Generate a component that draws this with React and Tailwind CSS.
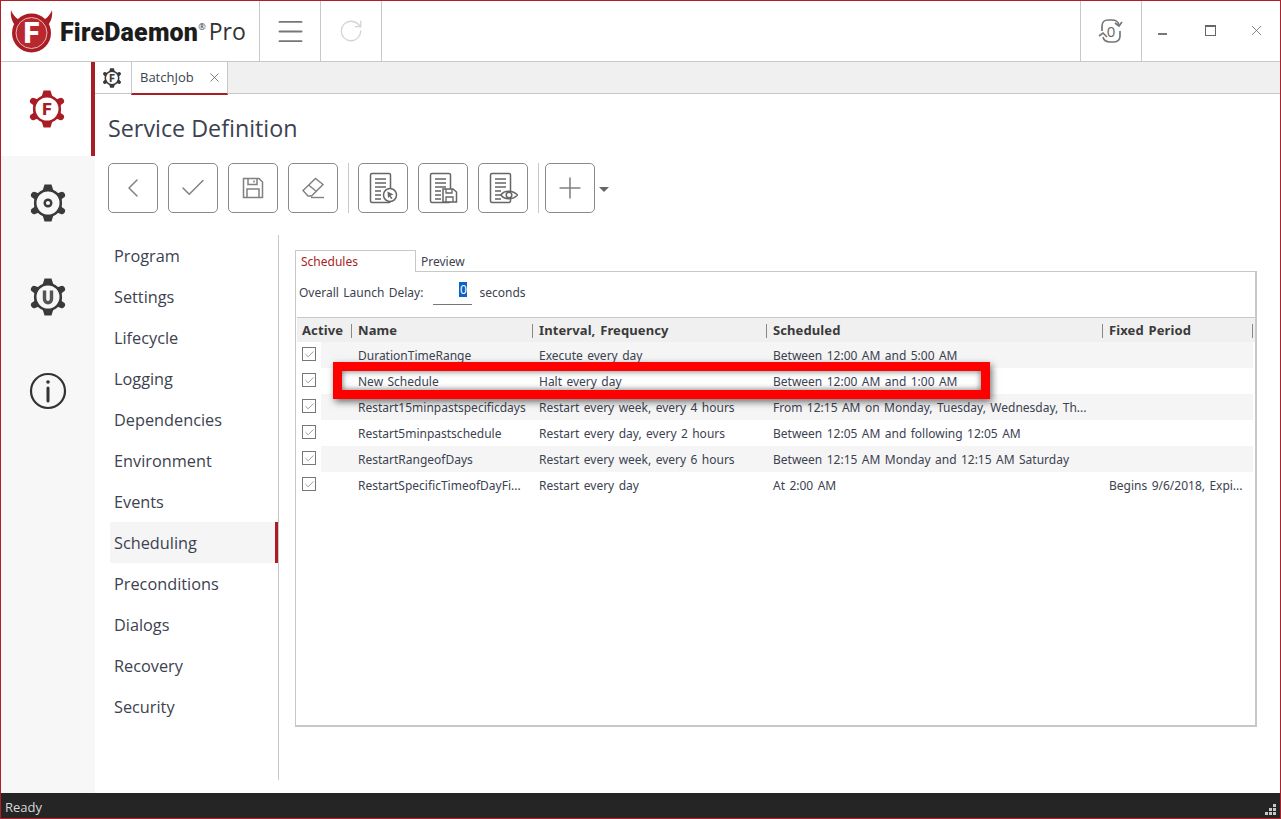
import { Menu, RotateCw, ChevronLeft, Check, Plus, X } from 'lucide-react';

const NAV = ['Program', 'Settings', 'Lifecycle', 'Logging', 'Dependencies', 'Environment', 'Events', 'Scheduling', 'Preconditions', 'Dialogs', 'Recovery', 'Security'];

const ROWS = [
    ['DurationTimeRange', 'Execute every day', 'Between 12:00 AM and 5:00 AM', ''],
    ['New Schedule', 'Halt every day', 'Between 12:00 AM and 1:00 AM', ''],
    ['Restart15minpastspecificdays', 'Restart every week, every 4 hours', 'From 12:15 AM on Monday, Tuesday, Wednesday, Th...', ''],
    ['Restart5minpastschedule', 'Restart every day, every 2 hours', 'Between 12:05 AM and following 12:05 AM', ''],
    ['RestartRangeofDays', 'Restart every week, every 6 hours', 'Between 12:15 AM Monday and 12:15 AM Saturday', ''],
    ['RestartSpecificTimeofDayFi...', 'Restart every day', 'At 2:00 AM', 'Begins 9/6/2018, Expi...'],
];

const COLS = 'grid grid-cols-[55px_181px_234px_336px_150px]';

export default function App() {
    return (
        <div className="h-[819px] w-[1281px] flex flex-col bg-white border border-[#b0202a] overflow-hidden font-['Open_Sans',sans-serif] text-[#333]">
            <TitleBar />
            <div className="flex flex-1 min-h-0">
                <SideRail />
                <div className="flex-1 flex flex-col min-w-0">
                    <TabStrip />
                    <h1 className="ml-[13px] mt-[16px] h-[36px] text-[23.3px] leading-[36px] text-[#3c4250]">Service Definition</h1>
                    <Toolbar />
                    <div className="flex flex-1 min-h-0 mt-[22px] mb-[13px]">
                        <SectionNav />
                        <SchedulePanel />
                    </div>
                </div>
            </div>
            <div className="h-[25px] shrink-0 bg-[#252525] text-[#d8d8d8] text-[13px] leading-[28px] pl-1 flex justify-between">
                <span>Ready</span>
                <Grip />
            </div>
        </div>
    );
}

function TitleBar() {
    return (
        <div className="h-[61px] shrink-0 flex border-b border-[#c8c8c8]">
            <div className="w-[258px] shrink-0 flex items-center pl-[9px]">
                <Logo />
                <span className="ml-[7px] mt-[3px] font-['Roboto',sans-serif] font-black text-[25px] tracking-[0.2px] text-[#1c1c1c]">FireDaemon</span>
                <span className="text-[9px] self-start mt-[19px] text-[#333]">®</span>
                <span className="ml-[3px] text-[23px] text-[#333]">Pro</span>
            </div>
            <div className="w-[61px] border-l border-[#c8c8c8] flex items-center justify-center">
                <Menu size={33} strokeWidth={1.4} className="text-[#777]" />
            </div>
            <div className="w-[62px] border-l border-r border-[#c8c8c8] flex items-center justify-center">
                <RotateCw size={26} strokeWidth={1.2} className="text-[#d4d4d4]" />
            </div>
            <div className="flex-1" />
            <div className="w-[62px] border-l border-r border-[#c8c8c8] flex items-center justify-center">
                <ResetIcon />
            </div>
            <div className="w-[138px] flex items-center text-[#666]">
                <div className="ml-[16px] mt-[5px] w-[9px] h-[2px] bg-[#777]" />
                <div className="ml-[38px] mt-[-1px] w-[11px] h-[11px] border border-t-2 border-[#666]" />
                <X size={17} strokeWidth={1.1} className="ml-[32px] mt-[-1px]" />
            </div>
        </div>
    );
}

function Logo() {
    return (
        <svg width="43" height="44" viewBox="0 0 43 44">
            <path d="M1 1 C0 9 3 15 8 19 L13 12 C8 11 3 7 1 1Z M42 1 C43 9 40 15 35 19 L30 12 C35 11 40 7 42 1Z" fill="#a81e24" />
            <circle cx="21.5" cy="24" r="19.5" fill="#a81e24" />
            <circle cx="21.5" cy="24" r="15.5" fill="#b8282e" stroke="#e8b8b8" strokeWidth="1" />
            <text x="21.5" y="34" textAnchor="middle" fontFamily="Roboto" fontWeight="900" fontSize="29" fill="#fff">F</text>
        </svg>
    );
}

function ResetIcon() {
    return (
        <svg width="28" height="28" viewBox="0 0 28 28" fill="none" stroke="#777" strokeWidth="1.7">
            <path d="M22 8 C21 4 18 3 15 3 H11 C7 3 5 6 5 9 V14" />
            <path d="M6 20 C7 24 10 25 13 25 H17 C21 25 23 22 23 19 V14" />
            <path d="M25 5 L22 9 L18 6" />
            <path d="M2 19 L6 16 L10 20" />
            <text x="14" y="20" textAnchor="middle" fontFamily="Open Sans" fontSize="15" fill="#666" stroke="none">0</text>
        </svg>
    );
}

function Gear({ size = 38, color = '#3a3a3a', stroke = 2.6, children }) {
    return (
        <svg width={size} height={size} viewBox="0 0 38 38" fill="none">
            {[0, 180].map((a) => (
                <path key={a} d="M13.5 7 L15.5 0.5 H22.5 L24.5 7 Z" fill={color} transform={`rotate(${a} 19 19)`} />
            ))}
            {[60, 120, 240, 300].map((a) => (
                <g key={a} transform={`rotate(${a} 19 19)`}>
                    <path d="M15 7 L16 3 H22 L23 7 Z" fill={color} />
                    <circle cx="19" cy="3" r="3.2" fill={color} />
                </g>
            ))}
            <circle cx="19" cy="19" r="12.8" stroke={color} strokeWidth={stroke} />
            {children}
        </svg>
    );
}

function SideRail() {
    return (
        <div className="w-[94px] shrink-0 bg-[#f7f7f7] flex flex-col items-stretch">
            <div className="h-[94px] bg-white border-r-[4px] border-[#a81e24] flex items-center justify-center pl-[1px]">
                <Gear color="#a81e24">
                    <text x="19" y="25" textAnchor="middle" fontFamily="Roboto" fontWeight="900" fontSize="17" fill="#a81e24">F</text>
                </Gear>
            </div>
            <div className="h-[94px] flex items-center justify-center">
                <Gear>
                    <circle cx="19" cy="19" r="3.3" stroke="#3a3a3a" strokeWidth="2.4" />
                </Gear>
            </div>
            <div className="h-[94px] flex items-center justify-center">
                <Gear>
                    <path d="M15.5 12.5 V21 C15.5 26 22.5 26 22.5 21 V12.5" stroke="#555" strokeWidth="3.4" />
                </Gear>
            </div>
            <div className="h-[94px] flex items-center justify-center">
                <svg width="38" height="38" viewBox="0 0 38 38" fill="none" stroke="#333" strokeWidth="2.2">
                    <circle cx="19" cy="19" r="17" />
                    <path d="M19 16 V29" strokeWidth="3" strokeLinecap="round" />
                    <circle cx="19" cy="10" r="1.8" fill="#333" stroke="none" />
                </svg>
            </div>
        </div>
    );
}

function TabStrip() {
    return (
        <div className="h-[32px] shrink-0 flex bg-[#f0f0f0] border-b border-[#c8c8c8]">
            <div className="w-[36px] bg-white flex items-center justify-center pr-[3px]">
                <Gear size={20} stroke={3}>
                    <text x="19" y="26" textAnchor="middle" fontFamily="Roboto" fontWeight="900" fontSize="19" fill="#3a3a3a">F</text>
                </Gear>
            </div>
            <div className="w-[97px] h-[33px] bg-white border-l border-r border-[#c8c8c8] border-b-2 border-b-[#a81e24] flex items-center pl-[8px] text-[13px] text-[#3c4250]">
                BatchJob
                <X size={15} strokeWidth={1.2} className="ml-[13px] text-[#555]" />
            </div>
        </div>
    );
}

function ToolButton({ children }) {
    return (
        <div className="w-[50px] h-[50px] border border-[#8a8a8a] rounded-[5px] flex items-center justify-center text-[#808080]">
            {children}
        </div>
    );
}

function DocIcon({ children }) {
    return (
        <svg width="30" height="32" viewBox="0 0 30 32" fill="none" stroke="#666" strokeWidth="1.5">
            <path d="M4 1.5 H21 C21.7 1.5 22.5 2 22.5 3 V28.5 C22.5 29.5 21.7 30.5 21 30.5 H4 C3 30.5 2.5 29.5 2.5 28.5 V3 C2.5 2 3 1.5 4 1.5Z" />
            <path d="M7 7 H18 M7 11 H18 M7 15 H18 M7 19 H13 M7 23 H13 M7 27 H13" strokeWidth="1.3" />
            {children}
        </svg>
    );
}

function Toolbar() {
    return (
        <div className="ml-[13px] mt-[17px] h-[50px] flex items-center shrink-0">
            <div className="flex gap-[10px]">
                <ToolButton><ChevronLeft size={32} strokeWidth={1.1} /></ToolButton>
                <ToolButton><Check size={30} strokeWidth={1.2} /></ToolButton>
                <ToolButton>
                    <svg width="22" height="22" viewBox="0 0 22 22" fill="none" stroke="#808080" strokeWidth="1.5">
                        <path d="M1.5 1.5 H17 L20.5 5 V20.5 H1.5 Z" />
                        <path d="M6 1.5 V7.5 H15 V1.5 M12 3.5 V5.5" />
                        <path d="M5 20.5 V12 H17 V20.5" />
                    </svg>
                </ToolButton>
                <ToolButton>
                    <svg width="24" height="22" viewBox="0 0 24 22" fill="none" stroke="#808080" strokeWidth="1.4">
                        <path d="M2 13.5 L14.5 1.5 L22 7.5 L10.5 19 H7 Z" />
                        <path d="M7.5 8 L15.5 14.5" />
                        <path d="M10 20.5 H23" />
                    </svg>
                </ToolButton>
            </div>
            <div className="w-px h-[50px] bg-[#c8c8c8] ml-[10px] mr-[9px]" />
            <div className="flex gap-[10px]">
                <ToolButton>
                    <DocIcon>
                        <circle cx="22" cy="23" r="6.5" fill="#fff" />
                        <path d="M19.5 19.5 L25.5 22.5 L22.5 23.5 L24.5 26.5 L23 27 L21.5 24.5 L20 26Z" fill="#666" stroke="none" />
                    </DocIcon>
                </ToolButton>
                <ToolButton>
                    <DocIcon>
                        <path d="M15 17 H25 L28.5 20 V30 H15 Z" fill="#fff" />
                        <path d="M18 17 V21 H24 V17 M18 30 V25 H25 V30" strokeWidth="1.3" />
                    </DocIcon>
                </ToolButton>
                <ToolButton>
                    <DocIcon>
                        <path d="M13 23 C16 18 25 18 29.5 23 C25 28 16 28 13 23Z" fill="#fff" />
                        <circle cx="21" cy="23" r="2.8" />
                    </DocIcon>
                </ToolButton>
            </div>
            <div className="w-px h-[50px] bg-[#c8c8c8] ml-[10px] mr-[6px]" />
            <ToolButton><Plus size={34} strokeWidth={1.1} /></ToolButton>
            <div className="ml-[4px] mt-[2px] w-0 h-0 border-x-[5px] border-x-transparent border-t-[5px] border-t-[#666]" />
        </div>
    );
}

function SectionNav() {
    return (
        <div className="w-[184px] shrink-0 border-r border-[#c8c8c8] pl-[15px] pt-0">
            {NAV.map((item) => (
                <div
                    key={item}
                    className={item === 'Scheduling'
                        ? 'h-[41px] bg-[#f5f5f5] border-r-[3px] border-[#a81e24] pl-[4px] leading-[43px] text-[16.3px] text-[#3c4250]'
                        : 'h-[41px] pl-[4px] leading-[43px] text-[16.3px] text-[#3c4250]'}
                >
                    {item}
                </div>
            ))}
        </div>
    );
}

function SchedulePanel() {
    return (
        <div className="ml-[16px] w-[962px] font-['Noto_Sans',sans-serif] text-[12px] text-[#3c4250] pt-[15px] [word-spacing:1.3px]">
            <div className="flex h-[21px]">
                <div className="relative z-10 w-[121px] h-[22px] bg-white border border-b-0 border-[#c8c8c8] pl-[5px] leading-[21px] text-[#a81e24]">Schedules</div>
                <div className="pl-[5px] leading-[23px]">Preview</div>
            </div>
            <div className="relative h-[456px] border border-[#c8c8c8] border-b-2 border-r-2">
                <div className="h-[45px] flex items-center pl-[3px] pb-[4px]">
                    <span>Overall Launch Delay:</span>
                    <div className="ml-[10px] w-[39px] h-[24px] border-b border-[#777] flex justify-end pr-[5px] pt-[1px]">
                        <span className="w-[8px] h-[15px] bg-[#0a64c8] text-white text-center leading-[15px]">0</span>
                    </div>
                    <span className="ml-[7px]">seconds</span>
                </div>
                <div className={`${COLS} h-[25px] ml-[1px] bg-[#f0f0f0] border-t border-[#c8c8c8] font-bold text-[#3a3a3a] leading-[25px] text-[13px] tracking-[0.1px]`}>
                    {['Active', 'Name', 'Interval, Frequency', 'Scheduled', 'Fixed Period'].map((h, i) => (
                        <div key={h} className={i === 0 ? 'pl-[5px] flex' : 'pl-[6px] flex'}>
                            <span className="flex-1">{h}</span>
                            <span className="w-px h-[14px] mt-[6px] bg-[#888]" />
                        </div>
                    ))}
                </div>
                {ROWS.map((r, i) => (
                    <div key={r[0]} className={`${COLS} h-[26px] ml-[1px] leading-[28px]`}>
                        <div className="pl-[5px] pt-[5px] flex">
                            <div className="w-[14px] h-[14px] border border-[#777] flex items-center justify-center shrink-0">
                                <Check size={11} strokeWidth={1.4} className="text-[#666]" />
                            </div>
                            {i % 2 === 0 && <div className="ml-[5px] -mt-[5px] flex-1 h-[26px] bg-[#f5f5f5]" />}
                        </div>
                        {r.map((c, j) => (
                            <div key={j} className={i % 2 === 0 ? 'pl-[6px] bg-[#f5f5f5] whitespace-nowrap overflow-hidden' : 'pl-[6px] whitespace-nowrap overflow-hidden'}>{c}</div>
                        ))}
                    </div>
                ))}
                <div className="absolute left-[37px] top-[90px] w-[657px] h-[37px] border-[9px] border-[#fe0000] shadow-[2px_3px_7px_rgba(0,0,0,0.55),inset_0_0_6px_rgba(0,0,0,0.6)]" />
            </div>
        </div>
    );
}

function Grip() {
    return (
        <svg width="12" height="12" viewBox="0 0 12 12" fill="#c8c8c8" className="self-end mr-[3px] mb-[2px]">
            <rect x="8" y="0" width="3" height="3" />
            <rect x="4" y="4" width="3" height="3" />
            <rect x="8" y="4" width="3" height="3" />
            <rect x="0" y="8" width="3" height="3" />
            <rect x="4" y="8" width="3" height="3" />
            <rect x="8" y="8" width="3" height="3" />
        </svg>
    );
}
